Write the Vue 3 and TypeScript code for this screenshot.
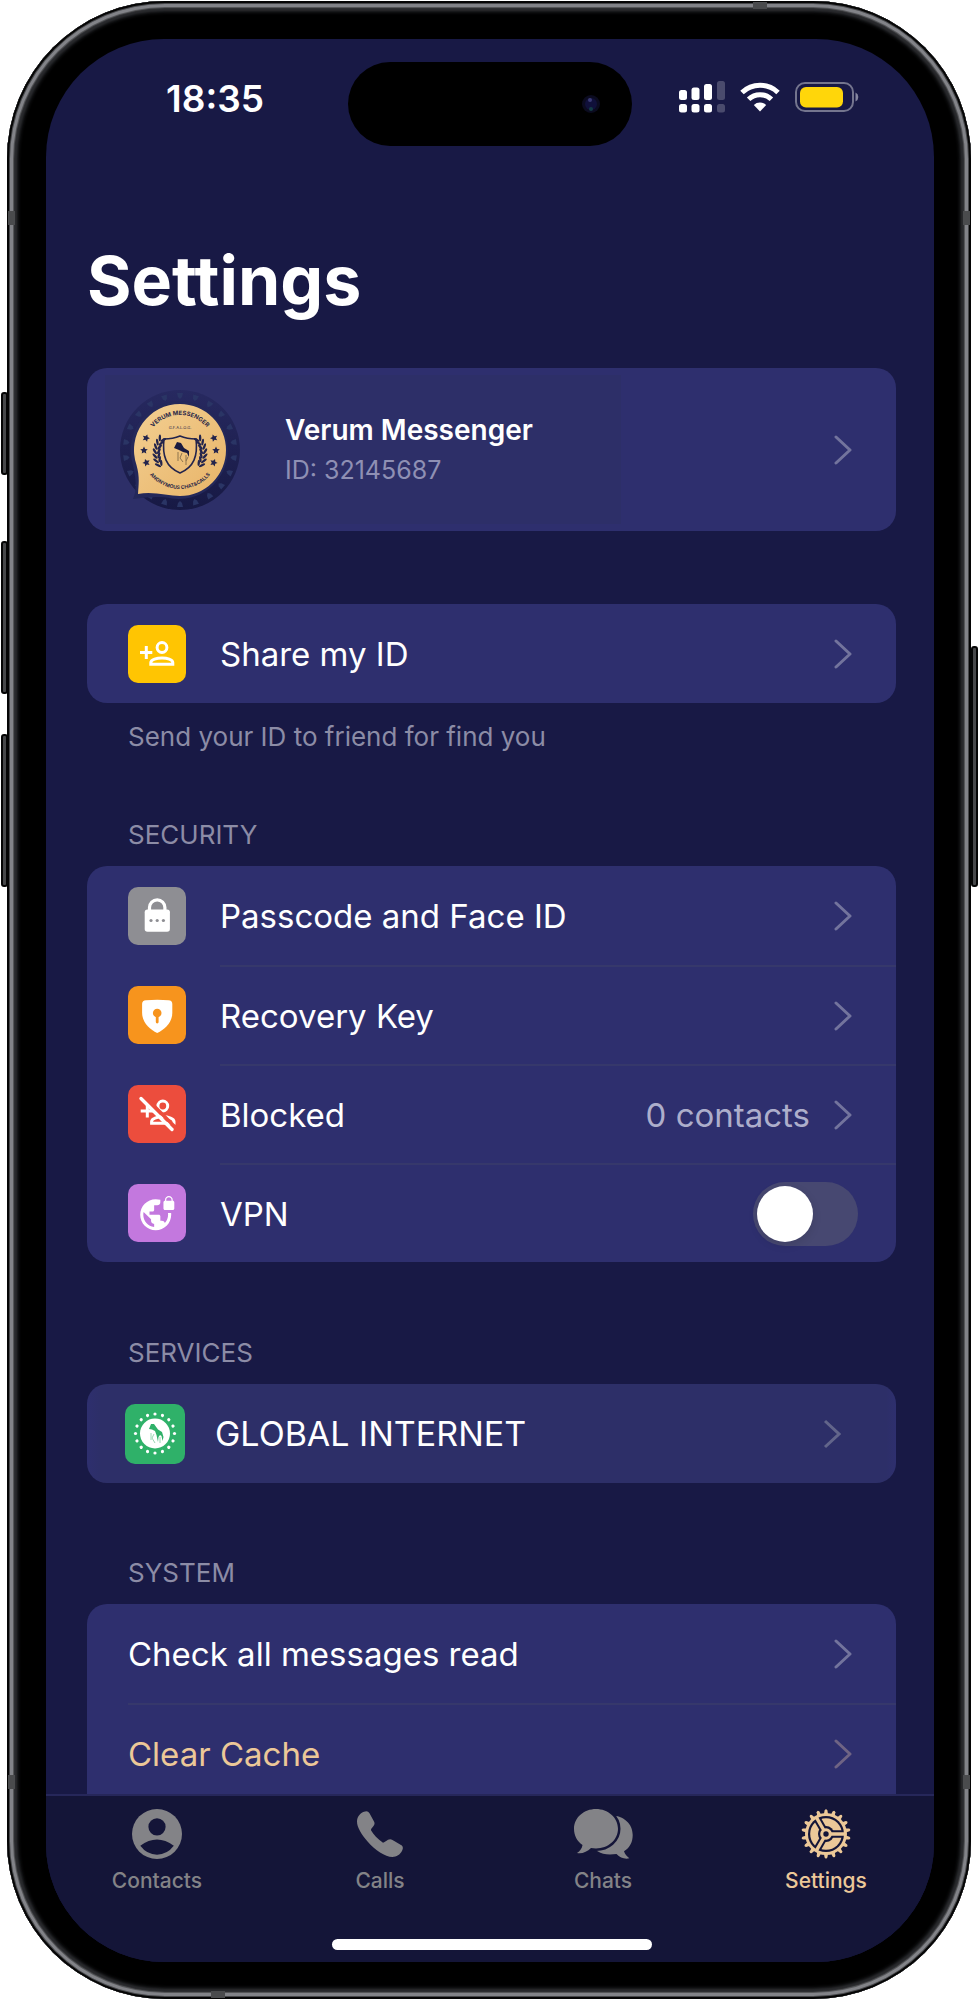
<script setup lang="ts">
import { ref } from 'vue'

interface Row {
  id: string
  label: string
  icon?: string
  value?: string
  accent?: boolean
  toggle?: boolean
}

interface Section {
  id: string
  title?: string
  note?: string
  tinted?: boolean
  rows: Row[]
}

const sections: Section[] = [
  {
    id: 'share',
    note: 'Send your ID to friend for find you',
    rows: [{ id: 'share-id', label: 'Share my ID', icon: 'share' }],
  },
  {
    id: 'security',
    title: 'SECURITY',
    rows: [
      { id: 'passcode', label: 'Passcode and Face ID', icon: 'lock' },
      { id: 'recovery', label: 'Recovery Key', icon: 'shield' },
      { id: 'blocked', label: 'Blocked', icon: 'blocked', value: '0 contacts' },
      { id: 'vpn', label: 'VPN', icon: 'vpn', toggle: true },
    ],
  },
  {
    id: 'services',
    title: 'SERVICES',
    tinted: true,
    rows: [{ id: 'internet', label: 'GLOBAL INTERNET', icon: 'global' }],
  },
  {
    id: 'system',
    title: 'SYSTEM',
    rows: [
      { id: 'read', label: 'Check all messages read' },
      { id: 'cache', label: 'Clear Cache', accent: true },
    ],
  },
]

const tabs = ['Contacts', 'Calls', 'Chats', 'Settings']
const activeTab = ref('Settings')
const vpnOn = ref(false)

const steps = (count: number) => Array.from({ length: count }, (_, i) => (i * 360) / count)
const gearTeeth = steps(18)
const sunDots = steps(16)
const sealMarks = steps(22)
const leaves = [0, 1, 2, 3, 4, 5, 6]
const stars = [-20, 0, 20]
</script>

<template>
  <div class="stage">
    <div class="phone">
      <i class="key key-action"></i>
      <i class="key key-up"></i>
      <i class="key key-down"></i>
      <i class="key key-power"></i>
      <i class="band band-lt"></i>
      <i class="band band-rt"></i>
      <i class="band band-lb"></i>
      <i class="band band-rb"></i>
      <i class="band band-top"></i>
      <i class="band band-bottom"></i>

      <div class="screen">
        <header class="status">
          <time class="clock">18:35</time>
          <div class="island">
            <svg class="lens" viewBox="0 0 20 20" aria-hidden="true">
              <circle cx="10" cy="10" r="9" fill="#0b0b1f" />
              <circle cx="10" cy="10" r="6" fill="#10103a" />
              <circle cx="9" cy="6" r="2" fill="#3a3a74" />
              <circle cx="10" cy="15" r="2" fill="#123b45" />
            </svg>
          </div>
          <div class="indicators">
            <svg width="46" height="32" viewBox="0 0 46 32" fill="#fff" aria-label="Signal">
              <rect x="0" y="9" width="8" height="10" rx="2.5" />
              <rect x="12.500" y="6.500" width="8" height="12.500" rx="2.500" />
              <rect x="25" y="3" width="8" height="16" rx="2.500" />
              <rect x="38" y="0" width="8" height="19" rx="2.500" opacity=".22" />
              <rect x="0" y="23" width="8" height="8.500" rx="2.500" />
              <rect x="12.500" y="23" width="8" height="8.500" rx="2.500" />
              <rect x="25" y="23" width="8" height="8.500" rx="2.500" />
              <rect x="38" y="23" width="8" height="8.500" rx="2.500" opacity=".22" />
            </svg>
            <svg width="40" height="30" viewBox="0 0 40 30" aria-label="Wi-Fi">
              <g fill="none" stroke="#fff" stroke-width="5">
                <path d="M2 10.500 A26 26 0 0 1 38 10.500" />
                <path d="M8.600 17.200 A16.500 16.500 0 0 1 31.400 17.200" />
              </g>
              <path d="M20 29.500 L13.800 23 A9 9 0 0 1 26.200 23 Z" fill="#fff" />
            </svg>
            <svg width="64" height="30" viewBox="0 0 64 30" aria-label="Battery">
              <rect x="1" y="1" width="57" height="28" rx="9" fill="none" stroke="#74758e" stroke-width="2" />
              <rect x="5" y="5" width="43" height="20.500" rx="6" fill="#ffd60a" />
              <path d="M60.500 10.500 a5 5 0 0 1 0 9 z" fill="#8586a0" />
            </svg>
          </div>
        </header>

        <main class="content">
          <h1>Settings</h1>

          <a class="profile" href="#profile">
            <svg class="seal" viewBox="0 0 124 124" role="img" aria-label="Verum Messenger seal">
              <defs>
                <linearGradient id="gold" x1="0" y1="0" x2="1" y2="1">
                  <stop offset="0" stop-color="#f3cf92" />
                  <stop offset="1" stop-color="#e8b468" />
                </linearGradient>
                <linearGradient id="navy" x1="0" y1="0" x2="0" y2="1">
                  <stop offset="0" stop-color="#272960" />
                  <stop offset="1" stop-color="#171944" />
                </linearGradient>
                <path id="arc-top" d="M27 62 A35 35 0 0 1 97 62" />
                <path id="arc-bottom" d="M23 62 A39 39 0 0 0 101 62" />
              </defs>
              <circle cx="62" cy="62" r="60" fill="url(#navy)" />
              <path
                v-for="a in sealMarks"
                :key="a"
                d="M59 5 h6 l-1 4 -2 2 -2 -2z"
                fill="#2a3565"
                :transform="`rotate(${a} 62 62)`"
              />
              <path
                d="M62 13 A49 49 0 1 1 54 110.500 C42 108 30 109 15 111 C20 100 17 88 15 77 A49 49 0 0 1 62 13Z"
                fill="#24285a"
              />
              <path
                d="M62 16 A46 46 0 1 1 62 108 C50 108 35 103 20 106 C20.500 96 22 90 18.500 77 A46 46 0 0 1 62 16Z"
                fill="url(#gold)"
              />
              <g class="seal-text">
                <text><textPath href="#arc-top" startOffset="50%" text-anchor="middle">VERUM MESSENGER</textPath></text>
                <text class="seal-foot"><textPath href="#arc-bottom" startOffset="50%" text-anchor="middle">ANONYMOUS CHAT&amp;CALLS</textPath></text>
                <text class="seal-small" x="62" y="41" text-anchor="middle">G.F.A.L.O.G.</text>
              </g>
              <path
                d="M46 51 Q55 51 62 48 Q69 51 78 51 C80 68 76 79 62 85 C48 79 44 68 46 51Z"
                fill="none"
                stroke="#23244c"
                stroke-width="1.600"
              />
              <path d="M56 60 L59 54 L63 55 L66 60 L71 63 L71 69 L69 65 L65 64 L61 62Z" fill="#191a40" />
              <path d="M60 64 v9 M64 65 l-2 5 3 4 M68 67 v10 M70 69 l-2 4" stroke="#8d744f" stroke-width="1" fill="none" />
              <g fill="#23244c">
                <g v-for="side in [1, -1]" :key="side" :transform="side < 0 ? 'translate(124 0) scale(-1 1)' : undefined">
                  <g v-for="l in leaves" :key="l" :transform="`rotate(${l * -11 + 30} 62 65)`">
                    <ellipse cx="37" cy="62" rx="1.200" ry="3.400" transform="rotate(-28 37 62)" />
                    <ellipse cx="41" cy="62" rx="1.200" ry="3.200" transform="rotate(32 41 62)" />
                  </g>
                  <g v-for="s in stars" :key="s" :transform="`rotate(${s} 62 62)`">
                    <path d="M26 58.500 l1.200 2.400 2.600 .4 -2 1.700 .5 2.600 -2.300 -1.300 -2.300 1.300 .5 -2.600 -2 -1.700 2.600 -.4z" />
                  </g>
                </g>
              </g>
            </svg>
            <span class="who">
              <strong>Verum Messenger</strong>
              <span>ID: 32145687</span>
            </span>
            <svg class="chevron" viewBox="0 0 18 30" aria-hidden="true"><path d="M2 2 L16 15 L2 28" /></svg>
          </a>

          <section v-for="s in sections" :key="s.id" :class="['group', s.id]">
            <h2 v-if="s.title">{{ s.title }}</h2>
            <div :class="['card', { tinted: s.tinted }]">
              <component
                :is="row.toggle ? 'label' : 'button'"
                v-for="row in s.rows"
                :key="row.id"
                :type="row.toggle ? undefined : 'button'"
                :class="['row', { accent: row.accent }]"
              >
                <span v-if="row.icon" :class="['tile', row.icon]">
                  <svg v-if="row.icon === 'share'" viewBox="0 0 58 58" fill="none" stroke="#fff" stroke-width="3">
                    <circle cx="34" cy="22.500" r="4.900" />
                    <path d="M22.800 39.300 V37.700 C22.800 34.500 29 33 34 33 S44.800 34.500 44.800 37.700 V39.300Z M12 27.500 H24.300 M18.300 21 V34" />
                  </svg>
                  <svg v-else-if="row.icon === 'lock'" viewBox="0 0 58 58">
                    <path d="M21.500 24 V20.500 A7.700 7.700 0 0 1 36.900 20.500 V24" fill="none" stroke="#fff" stroke-width="3.200" />
                    <rect x="16.700" y="22.500" width="25.200" height="22.300" rx="2.800" fill="#fff" />
                    <g fill="#8e8e93">
                      <circle cx="23" cy="33.500" r="1.600" />
                      <circle cx="29.200" cy="33.500" r="1.600" />
                      <circle cx="35.400" cy="33.500" r="1.600" />
                    </g>
                  </svg>
                  <svg v-else-if="row.icon === 'shield'" viewBox="0 0 58 58">
                    <path
                      d="M18 14.200 Q29.200 13.400 40.500 14.200 Q44.300 14.500 44.300 18 V27 C44.300 36 37 43.500 29.200 47 C21.500 43.500 14.100 36 14.100 27 V18 Q14.100 14.500 18 14.200Z"
                      fill="#fff"
                    />
                    <circle cx="29.200" cy="27" r="4.300" fill="#f7941d" />
                    <path d="M29.200 28 V36" stroke="#f7941d" stroke-width="2.800" stroke-linecap="round" />
                  </svg>
                  <svg v-else-if="row.icon === 'blocked'" viewBox="0 0 58 58" fill="none" stroke="#fff" stroke-width="3">
                    <circle cx="34.800" cy="21" r="4.900" />
                    <path d="M23.600 38.300 V36.500 C23.600 33.500 29 31.800 34.800 31.800 S46 33.500 46 36.500 V38.300Z M12.700 26 H25 M19.300 19 V32.500" />
                    <path d="M16.500 11.500 L49 44" stroke="#ec4d3d" stroke-width="3.500" />
                    <path d="M13 13.500 L44 44.500" stroke-width="3.400" stroke-linecap="round" />
                  </svg>
                  <svg v-else-if="row.icon === 'vpn'" viewBox="0 0 58 58">
                    <path
                      transform="translate(10.650 10.500) scale(1.550)"
                      fill="#fff"
                      d="M22 4v-.5C22 2.120 20.880 1 19.500 1S17 2.120 17 3.500V4c-.55 0-1 .45-1 1v4c0 .55.45 1 1 1h5c.55 0 1-.45 1-1V5c0-.55-.45-1-1-1zm-.8 0h-3.400v-.5c0-.94.76-1.700 1.700-1.700s1.700.76 1.700 1.700V4zm-2.280 8c.04.33.08.66.08 1 0 2.080-.8 3.970-2.100 5.390-.26-.81-1-1.390-1.900-1.390h-1v-3c0-.55-.45-1-1-1H7v-2h2c.55 0 1-.45 1-1V7h2c1.100 0 2-.9 2-2V3.460c-.95-.3-1.950-.46-3-.46C5.480 3 1 7.480 1 13s4.480 10 10 10 10-4.480 10-10c0-.34-.02-.67-.05-1h-2.030zM10 20.930c-3.950-.49-7-3.850-7-7.930 0-.62.08-1.210.21-1.790L8 16v1c0 1.100.9 2 2 2v1.930z"
                    />
                  </svg>
                  <svg v-else viewBox="0 0 60 60">
                    <circle cx="30" cy="29.500" r="15" fill="#fff" />
                    <circle
                      v-for="a in sunDots"
                      :key="a"
                      cx="30"
                      cy="10"
                      r="1.600"
                      fill="#fff"
                      :transform="`rotate(${a} 30 29.500)`"
                    />
                    <path d="M24 25 L26 20 L29 20 L33 25.500 L37 28 L38.500 33 L37.500 37 L36.500 32 L35 31 L33.500 33 L33 38 L31.500 31 L30 27 L27 25.500Z" fill="#2fb169" />
                    <path d="M26 29 v7 M29 30 l-2 4 3 5 M35 33 v6" stroke="#9ad6b4" stroke-width="1" fill="none" />
                  </svg>
                </span>
                <span class="line">
                  <span class="label">{{ row.label }}</span>
                  <span v-if="row.value" class="value">{{ row.value }}</span>
                  <input v-if="row.toggle" v-model="vpnOn" type="checkbox" role="switch" class="switch" />
                  <svg v-else class="chevron" viewBox="0 0 18 30" aria-hidden="true"><path d="M2 2 L16 15 L2 28" /></svg>
                </span>
              </component>
            </div>
            <p v-if="s.note">{{ s.note }}</p>
          </section>
        </main>

        <footer class="dock">
          <nav class="tabs">
            <button
              v-for="t in tabs"
              :key="t"
              type="button"
              :class="['tab', { active: t === activeTab }]"
              @click="activeTab = t"
            >
              <svg v-if="t === 'Contacts'" width="50" height="50" viewBox="0 0 50 50">
                <circle cx="25" cy="25" r="25" fill="currentColor" />
                <circle cx="25" cy="17.800" r="8.600" fill="#141538" />
                <path d="M8.300 36.800 Q25 24 41.800 36.800 Q35 45.700 25 45.700 Q15 45.700 8.300 36.800Z" fill="#141538" />
              </svg>
              <svg v-else-if="t === 'Calls'" width="46" height="50" viewBox="0 -2 46 50">
                <path
                  fill="currentColor"
                  d="M7 .8 C9.500 -.4 11.300 .3 12.500 2.200 L17 10.500 C18 12.500 17.500 13.500 16.500 15 C15 17 13.800 18 14 19.200 C16.500 23.500 20.500 28 26 31.700 C27.500 31.500 29 30 31 28.800 C32.500 28 34 28 35.500 29 L44 34 C46 35.200 46.300 37 45.300 39.300 C43 44 39.500 46 35.500 46 C28 46 18 39 11 31 C4 23 0 16 0 10.500 C0 5.500 3.500 2 7 .8Z"
                />
              </svg>
              <svg v-else-if="t === 'Chats'" width="59" height="50" viewBox="0 0 59 50">
                <path
                  fill="currentColor"
                  d="M37 6.500 C50 6.500 58.700 15 58.700 26 C58.700 33 56 38.500 50 42.300 C51 45.500 53 47.500 55.300 49.300 C50.500 50.500 46 48.500 42.500 45 C35 45.800 28 45.500 24 42.500 C15 38 15 6.500 37 6.500Z"
                />
                <path
                  fill="currentColor"
                  stroke="#141538"
                  stroke-width="5"
                  paint-order="stroke"
                  d="M22 0 C34 0 44 8.500 44 19.700 C44 31 34 39.400 22 39.400 C20 39.400 18.500 39.300 17 39 C13 43 8 45 3 44 C6 42 8 39.500 8.500 36 C3 32 0 26.500 0 19.700 C0 8.500 10 0 22 0Z"
                />
              </svg>
              <svg v-else width="50" height="50" viewBox="0 0 50 50">
                <path
                  v-for="a in gearTeeth"
                  :key="a"
                  d="M22.800 6 L23.600 1.400 Q25 -.8 26.400 1.400 L27.200 6Z"
                  fill="currentColor"
                  :transform="`rotate(${a} 25 25)`"
                />
                <circle cx="25" cy="25" r="21" fill="currentColor" />
                <circle cx="25" cy="25" r="18" fill="#141538" />
                <circle cx="25" cy="25" r="15.800" fill="currentColor" />
                <circle cx="25" cy="25" r="8" fill="#141538" />
                <g v-for="a in [0, 120, 240]" :key="`s${a}`" :transform="`rotate(${a} 25 25)`">
                  <path d="M25 25 H42" stroke="#141538" stroke-width="7.400" />
                </g>
                <g v-for="a in [0, 120, 240]" :key="`b${a}`" :transform="`rotate(${a} 25 25)`">
                  <path d="M25 25 H44" stroke="currentColor" stroke-width="3.400" />
                </g>
                <circle cx="25" cy="25" r="5.800" fill="currentColor" />
                <circle cx="25" cy="25" r="2.700" fill="#141538" />
              </svg>
              <span>{{ t }}</span>
            </button>
          </nav>
          <div class="home"></div>
        </footer>
      </div>
    </div>
  </div>
</template>

<style>
body {
  background: #fff;
}
</style>

<style scoped>
* {
  box-sizing: border-box;
}

.stage {
  display: flex;
  height: 100vh;
  padding: 1px 8px 1px 7px;
  font-family: Inter, Roboto, "Liberation Sans", sans-serif;
}

.phone {
  position: relative;
  display: flex;
  flex: 1;
  padding: 38px 37px 37px 39px;
  border-radius: 158px;
  background: #000;
  box-shadow:
    inset 0 0 0 2px #050505,
    inset 0 0 0 3px #46474a,
    inset 0 0 0 6px #828388,
    inset 0 0 1px 7px #5a5b5e,
    inset 0 0 2px 10px #2a2b2e,
    inset 0 0 3px 12px #141517;
}

/* hardware keys and antenna bands sit over the frame edge */
.key {
  position: absolute;
  width: 7px;
  border: 2px solid #050505;
  border-radius: 3px;
  background: #47484a;
}
.key-action { left: -6px; top: 391px; height: 83px; }
.key-up { left: -6px; top: 540px; height: 153px; }
.key-down { left: -6px; top: 733px; height: 153px; }
.key-power { right: -7px; top: 645px; height: 241px; }

.band {
  position: absolute;
  width: 7px;
  height: 14px;
  background: #4a4b4d;
}
.band-lt { left: 1px; top: 210px; }
.band-rt { right: 1px; top: 210px; }
.band-lb { left: 1px; bottom: 210px; }
.band-rb { right: 1px; bottom: 210px; }
.band-top { right: 204px; top: 1px; width: 14px; height: 7px; }
.band-bottom { left: 204px; bottom: 1px; width: 14px; height: 7px; }

.screen {
  position: relative;
  display: flex;
  flex: 1;
  flex-direction: column;
  min-width: 0;
  overflow: hidden;
  border-radius: 118px;
  background: #181945;
  color: #fff;
}

.status {
  display: grid;
  grid-template-columns: 1fr 284px 1fr;
  align-items: center;
  height: 84px;
  margin-top: 23px;
}
.clock {
  padding: 0 84px 10px 0;
  justify-self: end;
  font-size: 37px;
  font-weight: 600;
  line-height: 42px;
}
.island {
  display: flex;
  align-items: center;
  justify-content: flex-end;
  height: 84px;
  padding-right: 31px;
  border-radius: 42px;
  background: #000;
}
.lens {
  width: 20px;
  height: 20px;
}
.indicators {
  display: flex;
  align-items: center;
  gap: 15px;
  padding: 0 0 14px 47px;
}

.content {
  flex: 1;
  min-height: 0;
  overflow: hidden;
  padding: 92px 38px 0 41px;
}

h1 {
  margin: 0 0 46px;
  font-size: 68px;
  font-weight: 700;
  line-height: 84px;
}

.profile {
  display: flex;
  align-items: center;
  height: 163px;
  padding: 0 44px 0 31px;
  border-radius: 20px;
  background: linear-gradient(#2d2f68, #2d2f68) 18px 7px / 516px 149px no-repeat #2e2f6e;
  color: inherit;
  text-decoration: none;
}
.seal {
  width: 124px;
  height: 124px;
  margin-right: 43px;
}
.seal-text {
  fill: #2b2848;
  font-size: 6px;
  font-weight: 700;
}
.seal-foot {
  font-size: 5px;
}
.seal-small {
  font-size: 4px;
  font-weight: 400;
}
.who {
  display: flex;
  flex: 1;
  flex-direction: column;
  gap: 6px;
  color: #8f90b4;
  font-size: 25px;
  line-height: 34px;
}
.who strong {
  color: #fff;
  font-size: 28px;
  font-weight: 600;
}

.chevron {
  flex: none;
  width: 18px;
  height: 30px;
  fill: none;
  stroke: #73749d;
  stroke-width: 3;
  stroke-linecap: round;
  stroke-linejoin: round;
}

.group.share,
.group.system {
  margin-top: 73px;
}
.group.security {
  margin-top: 64px;
}
.group.services {
  margin-top: 74px;
}
h2,
p {
  margin: 0;
  padding: 0 41px;
  color: #8c8ca6;
  font-size: 26px;
  font-weight: 400;
  line-height: 34px;
}
h2 {
  margin-bottom: 14px;
}
p {
  margin-top: 17px;
}

.card {
  overflow: hidden;
  border-radius: 20px;
  background: #2e2f6e;
}
/* the last card runs on beneath the tab bar */
.system .card {
  border-radius: 20px 20px 0 0;
}
.card.tinted {
  background: linear-gradient(90deg, #2e2f6e, #2d2f68 14px, #2d2f68 calc(100% - 10px), #2e2f6e);
}

.row {
  display: flex;
  align-items: center;
  width: 100%;
  height: 99px;
  padding: 0 0 0 41px;
  border: 0;
  background: none;
  color: #fff;
  font: inherit;
  font-size: 33px;
  font-weight: 400;
  text-align: left;
}
.line {
  display: flex;
  flex: 1;
  align-items: center;
  align-self: stretch;
  padding-right: 44px;
}
.row + .row .line {
  border-top: 2px solid #36386b;
}
.label {
  flex: 1;
}
.value {
  margin-right: 24px;
  color: #adaecb;
}
.accent .label {
  color: #ecc898;
}
.accent .chevron {
  stroke: #6f6484;
}

.tile {
  flex: none;
  width: 58px;
  height: 58px;
  margin-right: 34px;
  overflow: hidden;
  border-radius: 10px;
}
.tile svg {
  display: block;
  width: 100%;
  height: 100%;
}
.tile.share { background: #ffc502; }
.tile.lock { background: #8e8e93; }
.tile.shield { background: #f7941d; }
.tile.blocked { background: #ec4d3d; }
.tile.vpn { background: #c378de; }
.tile.global {
  width: 60px;
  height: 60px;
  margin-right: 30px;
  background: #2fb169;
}
.tinted .row {
  padding-left: 38px;
  font-size: 34px;
}
.tinted .line {
  padding-right: 55px;
}
.tinted .chevron {
  stroke: #62658a;
  stroke-linecap: butt;
  stroke-linejoin: miter;
}

.switch {
  flex: none;
  width: 105px;
  height: 64px;
  margin: 0 -6px 0 0;
  padding: 4px;
  appearance: none;
  border-radius: 32px;
  background: #474871;
}
.switch::before {
  display: block;
  width: 56px;
  height: 56px;
  border-radius: 50%;
  background: #fff;
  box-shadow: 0 3px 10px rgba(0, 0, 0, 0.12);
  content: "";
}
.switch:checked {
  background: #34c759;
}
.switch:checked::before {
  margin-left: auto;
}

.dock {
  display: flex;
  flex: none;
  flex-direction: column;
  justify-content: space-between;
  height: 168px;
  padding-bottom: 12px;
  border-top: 2px solid #26275a;
  background: #141538;
}
.tabs {
  display: grid;
  grid-template-columns: repeat(4, 25%);
  column-gap: 1px;
}
.tab {
  display: flex;
  flex-direction: column;
  align-items: center;
  gap: 9px;
  padding: 13px 0 0;
  border: 0;
  background: none;
  color: #838387;
  font: inherit;
  font-size: 21px;
  font-weight: 500;
  line-height: 26px;
}
.tab.active {
  color: #ecc898;
}
.home {
  align-self: center;
  width: 36%;
  height: 11px;
  margin-left: 4px;
  border-radius: 6px;
  background: #fff;
}
</style>
